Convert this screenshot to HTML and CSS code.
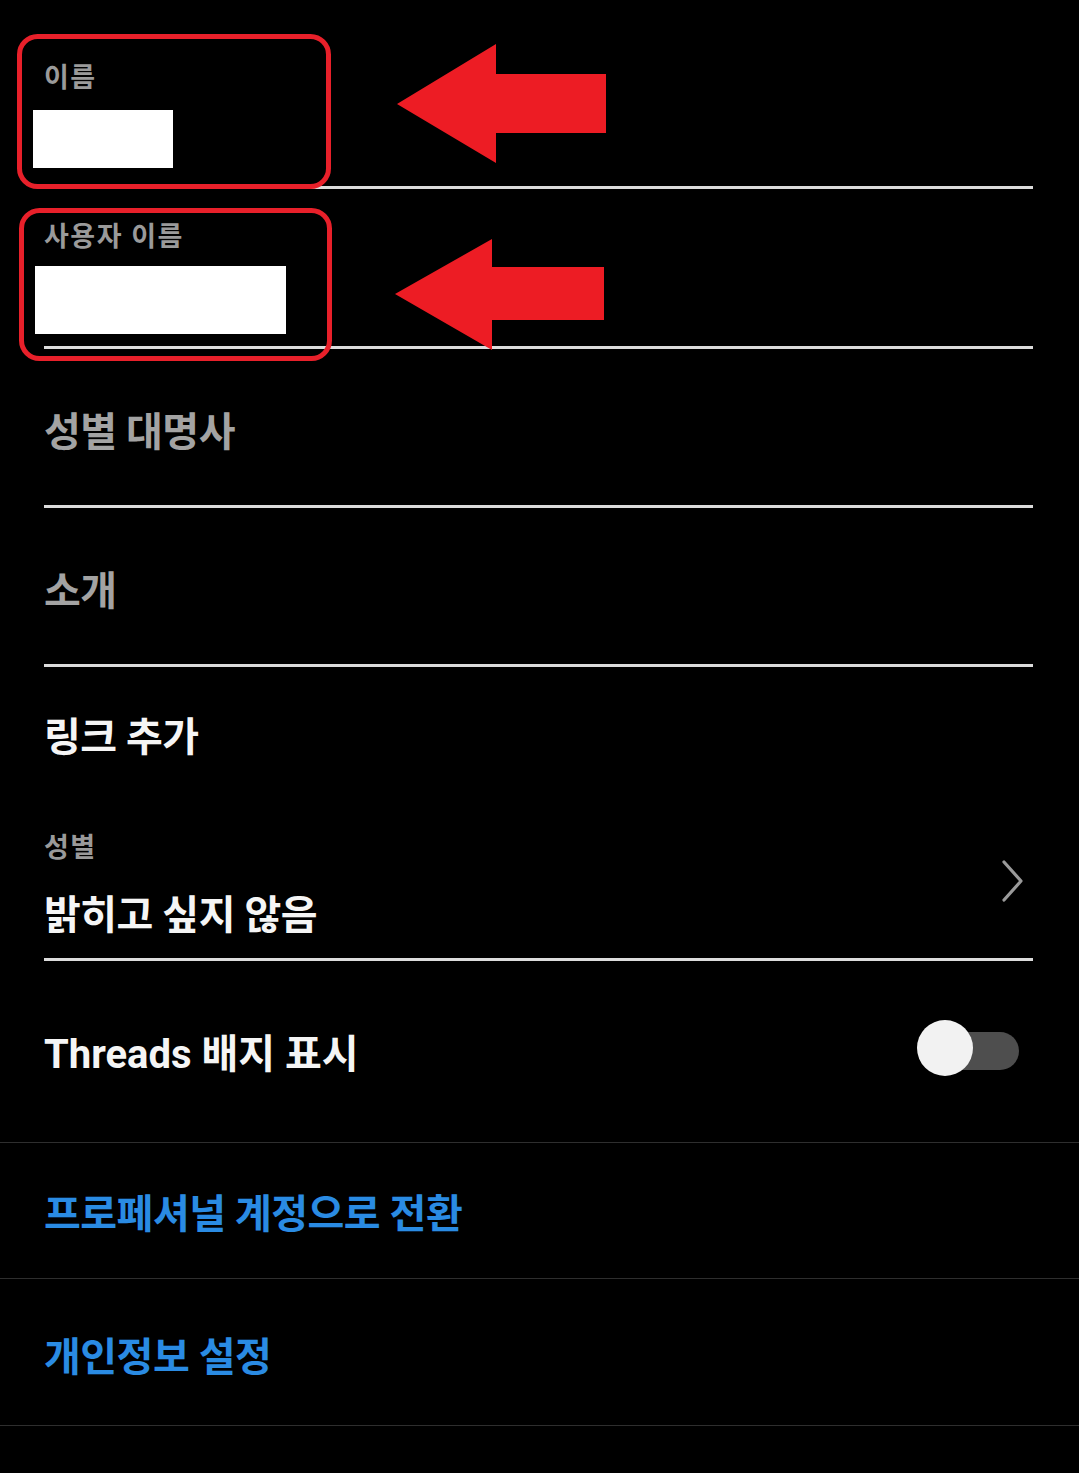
FILE: index.html
```html
<!DOCTYPE html>
<html lang="ko">
<head>
<meta charset="utf-8">
<title>프로필 편집</title>
<link rel="stylesheet" href="styles.css">
</head>
<body>
<main class="page">
  <section class="fields">
    <div class="field field-name">
      <div class="label">이름</div>
      <div class="redact redact-name"></div>
    </div>
    <div class="field field-username">
      <div class="label">사용자 이름</div>
      <div class="redact redact-username"></div>
    </div>
    <div class="field field-pronoun">
      <div class="placeholder">성별 대명사</div>
    </div>
    <div class="field field-bio">
      <div class="placeholder">소개</div>
    </div>
    <div class="link-row">
      <div class="big">링크 추가</div>
    </div>
    <div class="field field-gender">
      <div class="gender-text">
        <div class="label">성별</div>
        <div class="big gender-value">밝히고 싶지 않음</div>
      </div>
      <svg class="chevron" width="24" height="42" viewBox="0 0 24 42" aria-hidden="true">
        <polyline points="3,2 20,21 3,40" fill="none" stroke="#9a9a9a" stroke-width="3.2" stroke-linecap="round" stroke-linejoin="round"/>
      </svg>
    </div>
    <div class="threads-row">
      <div class="big threads-text">Threads 배지 표시</div>
      <div class="toggle">
        <div class="toggle-track"></div>
        <div class="toggle-knob"></div>
      </div>
    </div>
  </section>
  <section class="actions">
    <div class="action action-pro">프로페셔널 계정으로 전환</div>
    <div class="action action-privacy">개인정보 설정</div>
  </section>

  <svg class="annotations" width="1079" height="380" viewBox="0 0 1079 380" aria-hidden="true">
    <rect x="19.5" y="36.5" width="309" height="150" rx="18" ry="18" fill="none" stroke="#e8202a" stroke-width="5"/>
    <rect x="21.5" y="210.5" width="308" height="148" rx="18" ry="18" fill="none" stroke="#e8202a" stroke-width="5"/>
    <polygon points="397,104 496,44 496,74 606,74 606,133 496,133 496,163" fill="#ed1c24"/>
    <polygon points="395,294 492,239 492,267 604,267 604,320 492,320 492,350" fill="#ed1c24"/>
  </svg>
</main>
</body>
</html>
```

FILE: styles.css
```css
html, body {
  margin: 0;
  padding: 0;
  background: #000;
}

body {
  font-family: "Roboto", "Noto Sans CJK KR", "Noto Sans", sans-serif;
  color: #f5f5f5;
  width: 1079px;
  min-height: 1473px;
  overflow: hidden;
}

.page {
  position: relative;
  width: 1079px;
  min-height: 1473px;
}

.fields {
  padding: 0 46px 0 44px;
}

.field {
  border-bottom: 3px solid #dcdcdc;
}

.label {
  font-size: 27px;
  line-height: 32px;
  font-weight: 700;
  letter-spacing: 1.5px;
  color: #9a9a9a;
}

.redact {
  background: #fff;
}

.field-name {
  padding: 62px 0 18px;
}

.redact-name {
  margin: 16px 0 0 -11px;
  width: 140px;
  height: 58px;
}

.field-username {
  padding: 32px 0 12px;
}

.redact-username {
  margin: 13px 0 0 -9px;
  width: 251px;
  height: 68px;
}

.placeholder,
.big,
.action {
  font-size: 40px;
  line-height: 48px;
  font-weight: 700;
  letter-spacing: -0.5px;
}

.placeholder {
  color: #a3a3a3;
}

.big {
  color: #f5f5f5;
}

.field-pronoun {
  padding: 60px 0 48px;
}

.field-bio {
  padding: 60px 0 48px;
}

.link-row {
  padding-top: 47px;
}

.field-gender {
  margin-top: 70px;
  padding-bottom: 18px;
  display: flex;
  align-items: flex-start;
  justify-content: space-between;
}

.gender-value {
  margin-top: 28px;
}

.chevron {
  display: block;
  margin: 28px 8px 0 0;
}

.threads-row {
  padding: 59px 0 63px;
  display: flex;
  align-items: flex-start;
  justify-content: space-between;
}

.threads-text {
  margin-top: 11px;
  letter-spacing: 0;
}

.toggle {
  position: relative;
  width: 102px;
  height: 56px;
  margin-right: 14px;
  display: flex;
  align-items: flex-start;
  justify-content: flex-end;
}

.toggle-track {
  margin-top: 12px;
  width: 89px;
  height: 38px;
  border-radius: 19px;
  background: #4e4e4e;
}

.toggle-knob {
  position: absolute;
  left: 0;
  top: 0;
  width: 56px;
  height: 56px;
  border-radius: 50%;
  background: #f2f2f2;
}

.actions {
  border-top: 1px solid #2e2e2e;
}

.action {
  color: #2a8be3;
  padding-left: 44px;
  border-bottom: 1px solid #2e2e2e;
}

.action-pro {
  padding-top: 48px;
  padding-bottom: 39px;
}

.action-privacy {
  padding-top: 55px;
  padding-bottom: 43px;
}

.annotations {
  position: absolute;
  left: 0;
  top: 0;
}
```
